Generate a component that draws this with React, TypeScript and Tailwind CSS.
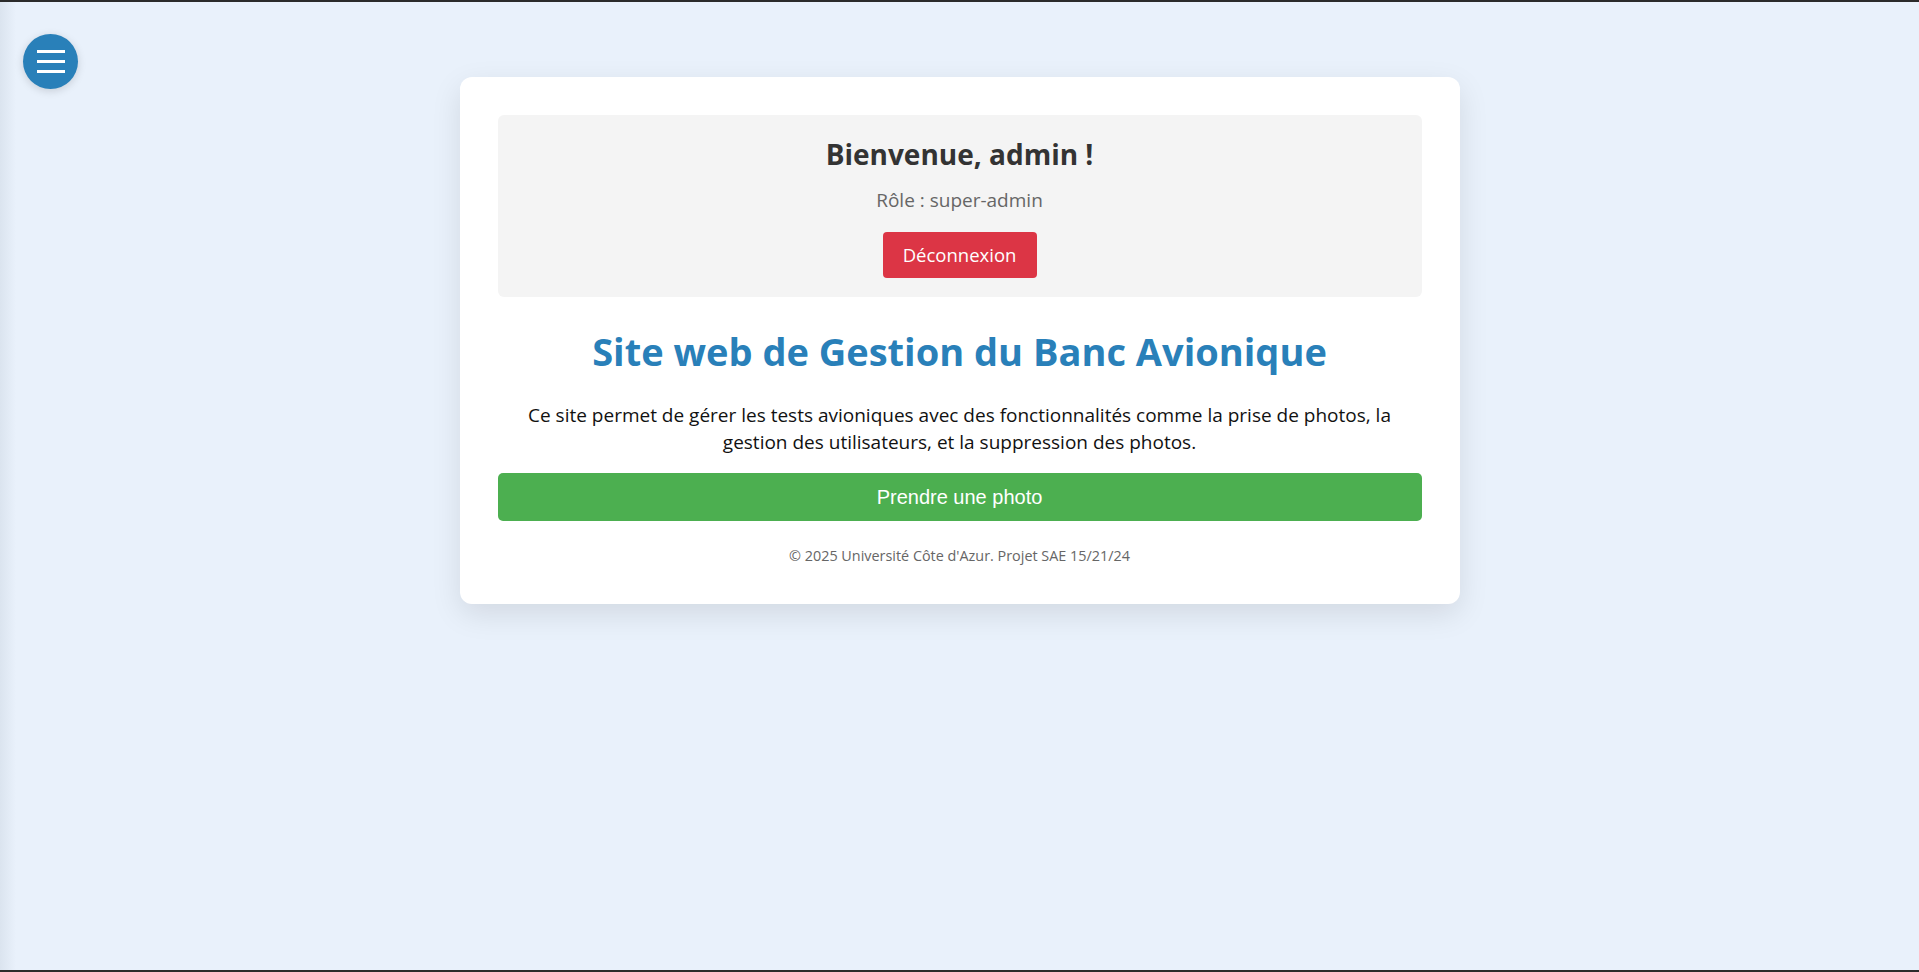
const FONT = "font-['Open_Sans','Noto_Sans',sans-serif]"

function SideToggle() {
  return (
    <button
      className="absolute left-[23px] top-[32px] w-[55px] h-[55px] rounded-full bg-[#2980b9] flex items-center justify-center shadow-[0_2px_8px_rgba(0,0,0,0.15)]"
      aria-label="Menu"
    >
      <span className="flex flex-col gap-[7.5px]">
        <span className="block w-[28px] h-[2.5px] bg-white" />
        <span className="block w-[28px] h-[2.5px] bg-white" />
        <span className="block w-[28px] h-[2.5px] bg-white" />
      </span>
    </button>
  )
}

export default function App() {
  return (
    <div className={`relative min-h-[972px] bg-[#e9f1fb] border-t-2 border-b-2 border-[#2b2b2b] ${FONT}`}>
      {/* off-canvas sidebar shadow */}
      <div className="absolute left-0 top-0 bottom-0 w-[16px] bg-gradient-to-r from-[#dbe4ef] to-transparent" />
      <SideToggle />

      <div className="pt-[75px]">
        <div className="mx-auto w-[1000px] bg-white rounded-[12px] px-[38px] pt-[38px] pb-[38px] shadow-[0_10px_30px_rgba(0,0,0,0.1)] text-center">
          <div className="bg-[#f4f4f4] rounded-[6px] pt-[23px] pb-[19px] flex flex-col items-center">
            <h2 className="text-[28px] leading-[32px] font-bold text-[#333]">Bienvenue, admin !</h2>
            <p className="mt-[17px] text-[19px] leading-[27px] text-[#666]">Rôle : super-admin</p>
            <button className="mt-[18px] h-[46px] w-[154px] rounded-[4px] bg-[#dc3545] text-white text-[18.5px]">
              Déconnexion
            </button>
          </div>

          <h1 className="mt-[30px] text-[38px] leading-[48px] font-bold text-[#2980b9]">
            Site web de Gestion du Banc Avionique
          </h1>

          <p className="mt-[27px] text-[19px] leading-[27px] text-[#111] px-[20px]">
            Ce site permet de gérer les tests avioniques avec des fonctionnalités comme la prise de photos, la gestion des
            utilisateurs, et la suppression des photos.
          </p>

          <button className="mt-[17px] w-full h-[48px] rounded-[5px] bg-[#4caf50] text-white text-[20px] font-['Liberation_Sans',Arial,sans-serif]">
            Prendre une photo
          </button>

          <p className="mt-[25px] text-[14.4px] leading-[20px] text-[#666]">
            © 2025 Université Côte d'Azur. Projet SAE 15/21/24
          </p>
        </div>
      </div>
    </div>
  )
}
